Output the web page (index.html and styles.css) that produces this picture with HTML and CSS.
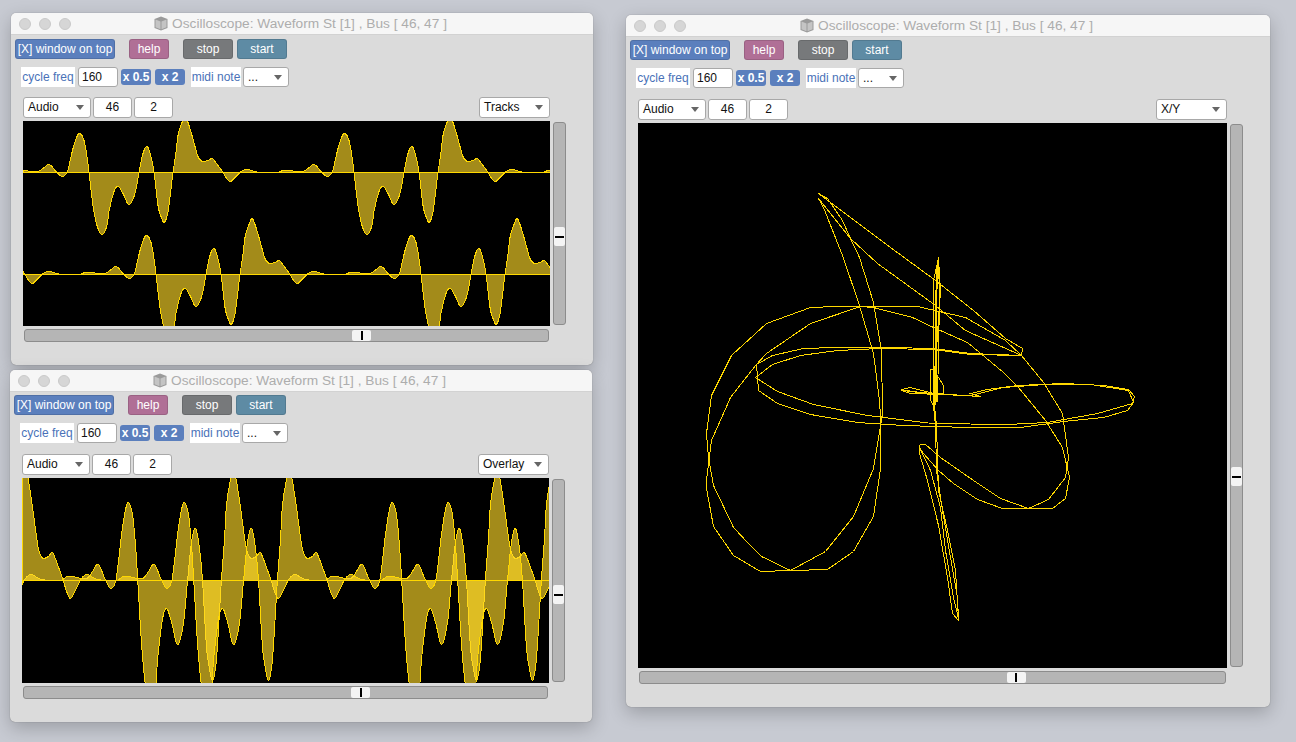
FILE: index.html
```html
<!DOCTYPE html>
<html lang="en">
<head>
  <meta charset="UTF-8" />
  <title>Oscilloscope</title>
  <link rel="stylesheet" href="styles.css">
</head>
<body>

  <div class="win win-tracks">
    <div class="titlebar">
      <div class="lights"><i></i><i></i><i></i></div>
      <div class="title">
        <svg class="cube" viewBox="0 0 14 15"><path d="M7 .5 13.5 3v9L7 14.5.5 12V3z" fill="#9a9a9a"/><path d="M1.5 3.6 6.5 5.6v7.6L1.5 11.3zM12.5 3.6 7.5 5.6v7.6l5-1.9z" fill="#c4c4c4"/></svg>
        Oscilloscope: Waveform St [1] , Bus [ 46, 47 ]
      </div>
    </div>
    <div class="row row-main">
      <button class="btn btn-ontop">[X] window on top</button>
      <button class="btn btn-help">help</button>
      <button class="btn btn-stop">stop</button>
      <button class="btn btn-start">start</button>
    </div>
    <div class="row row-freq">
      <span class="tag tag-cycle">cycle freq</span>
      <div class="field field-freq">160</div>
      <button class="mini mini-half">x 0.5</button>
      <button class="mini mini-double">x 2</button>
      <span class="tag tag-midi">midi note</span>
      <div class="pick pick-midi">...</div>
    </div>
    <div class="scope-area">
      <div class="row row-source">
        <div class="pick pick-audio">Audio</div>
        <div class="field field-num">46</div>
        <div class="field field-num">2</div>
        <div class="pick pick-mode">Tracks</div>
      </div>
      <div class="scope-spacer"></div>
      <svg class="scope" id="scope-tracks"></svg>
      <div class="vslider"><span class="vthumb"></span></div>
      <div class="hslider"><span class="hthumb"></span></div>
    </div>
  </div>

  <div class="win win-overlay">
    <div class="titlebar">
      <div class="lights"><i></i><i></i><i></i></div>
      <div class="title">
        <svg class="cube" viewBox="0 0 14 15"><path d="M7 .5 13.5 3v9L7 14.5.5 12V3z" fill="#9a9a9a"/><path d="M1.5 3.6 6.5 5.6v7.6L1.5 11.3zM12.5 3.6 7.5 5.6v7.6l5-1.9z" fill="#c4c4c4"/></svg>
        Oscilloscope: Waveform St [1] , Bus [ 46, 47 ]
      </div>
    </div>
    <div class="row row-main">
      <button class="btn btn-ontop">[X] window on top</button>
      <button class="btn btn-help">help</button>
      <button class="btn btn-stop">stop</button>
      <button class="btn btn-start">start</button>
    </div>
    <div class="row row-freq">
      <span class="tag tag-cycle">cycle freq</span>
      <div class="field field-freq">160</div>
      <button class="mini mini-half">x 0.5</button>
      <button class="mini mini-double">x 2</button>
      <span class="tag tag-midi">midi note</span>
      <div class="pick pick-midi">...</div>
    </div>
    <div class="scope-area">
      <div class="row row-source">
        <div class="pick pick-audio">Audio</div>
        <div class="field field-num">46</div>
        <div class="field field-num">2</div>
        <div class="pick pick-mode">Overlay</div>
      </div>
      <div class="scope-spacer"></div>
      <svg class="scope" id="scope-overlay"></svg>
      <div class="vslider"><span class="vthumb"></span></div>
      <div class="hslider"><span class="hthumb"></span></div>
    </div>
  </div>

  <div class="win win-xy">
    <div class="titlebar">
      <div class="lights"><i></i><i></i><i></i></div>
      <div class="title">
        <svg class="cube" viewBox="0 0 14 15"><path d="M7 .5 13.5 3v9L7 14.5.5 12V3z" fill="#9a9a9a"/><path d="M1.5 3.6 6.5 5.6v7.6L1.5 11.3zM12.5 3.6 7.5 5.6v7.6l5-1.9z" fill="#c4c4c4"/></svg>
        Oscilloscope: Waveform St [1] , Bus [ 46, 47 ]
      </div>
    </div>
    <div class="row row-main">
      <button class="btn btn-ontop">[X] window on top</button>
      <button class="btn btn-help">help</button>
      <button class="btn btn-stop">stop</button>
      <button class="btn btn-start">start</button>
    </div>
    <div class="row row-freq">
      <span class="tag tag-cycle">cycle freq</span>
      <div class="field field-freq">160</div>
      <button class="mini mini-half">x 0.5</button>
      <button class="mini mini-double">x 2</button>
      <span class="tag tag-midi">midi note</span>
      <div class="pick pick-midi">...</div>
    </div>
    <div class="scope-area">
      <div class="row row-source">
        <div class="pick pick-audio">Audio</div>
        <div class="field field-num">46</div>
        <div class="field field-num">2</div>
        <div class="pick pick-mode">X/Y</div>
      </div>
      <div class="scope-spacer"></div>
      <svg class="scope" id="scope-xy"></svg>
      <div class="vslider"><span class="vthumb"></span></div>
      <div class="hslider"><span class="hthumb"></span></div>
    </div>
  </div>

  <script src="scope.js"></script>
</body>
</html>
```

FILE: styles.css
```css
* {
  box-sizing: border-box;
}

html, body {
  height: 100%;
}

body {
  margin: 0;
  overflow: hidden;
  position: relative;
  background: #c7cad2;
  font-family: "Liberation Sans", Arial, sans-serif;
  font-size: 12px;
  color: #111;
}

/* windows sit on a free desktop */
.win {
  position: absolute;
  display: flex;
  flex-direction: column;
  background: #dbdbdb;
  border-radius: 5px;
  box-shadow: 0 0 1px rgba(0, 0, 0, 0.45), 0 6px 18px rgba(0, 0, 0, 0.22);
  --scope-w: 527px;
  --scope-h: 205px;
  --row-top: 4px;
  --source-top: 10px;
  --vthumb-shift: 26px;
  --hthumb-shift: 150px;
}

.win-tracks {
  left: 11px;
  top: 13px;
  width: 582px;
  height: 352px;
}

.win-overlay {
  left: 10px;
  top: 370px;
  width: 582px;
  height: 352px;
  --row-top: 3px;
  --source-top: 11px;
  --vthumb-shift: 28px;
}

.win-xy {
  left: 626px;
  top: 15px;
  width: 644px;
  height: 692px;
  --scope-w: 589px;
  --scope-h: 545px;
  --row-top: 3px;
  --source-top: 11px;
  --vthumb-shift: 162px;
  --hthumb-shift: 167px;
}

.titlebar {
  display: grid;
  grid-template-columns: 1fr auto 1fr;
  align-items: center;
  height: 22px;
  padding: 0 8px;
  background: #f6f6f6;
  border-bottom: 1px solid #d2d2d2;
  border-radius: 5px 5px 0 0;
}

.lights {
  display: flex;
  gap: 8px;
}

.lights i {
  width: 12px;
  height: 12px;
  border-radius: 50%;
  background: #d6d6d6;
  border: 1px solid #cacaca;
}

.title {
  display: flex;
  align-items: center;
  gap: 4px;
  margin-right: 3px;
  font-size: 13.7px;
  color: #adadad;
  white-space: nowrap;
}

.cube {
  width: 14px;
  height: 15px;
}

.row {
  display: flex;
  align-items: center;
}

.row-main {
  height: 20px;
  margin: var(--row-top) 0 0 4px;
}

.row-freq {
  height: 20px;
  margin: 8px 0 0 10px;
}

button {
  font-family: inherit;
  border: none;
  padding: 0;
  color: #fff;
  text-align: center;
}

.btn {
  height: 20px;
  font-size: 12px;
  border-radius: 3px;
  border: 1px solid rgba(0, 0, 0, 0.12);
}

.btn-ontop {
  width: 100px;
  background: #5b7fbd;
}

.btn-help {
  width: 40px;
  margin-left: 14px;
  background: #b06f96;
}

.btn-stop {
  width: 50px;
  margin-left: 14px;
  background: #77797b;
}

.btn-start {
  width: 50px;
  margin-left: 4px;
  background: #5e8ba4;
}

.tag {
  height: 20px;
  line-height: 20px;
  background: #fff;
  color: #4a72b8;
  white-space: nowrap;
  text-align: center;
}

.tag-cycle {
  width: 54px;
}

.tag-midi {
  width: 50px;
  margin-left: 6px;
}

.field, .pick {
  height: 20px;
  line-height: 18px;
  background: #fff;
  border: 1px solid #a8a8a8;
  border-radius: 3px;
  color: #111;
}

.field-freq {
  width: 40px;
  margin-left: 3px;
  padding-left: 3px;
}

.field-num {
  width: 39px;
  margin-left: 2px;
  text-align: center;
}

.mini {
  height: 16px;
  font-size: 12px;
  font-weight: bold;
  border-radius: 3px;
  background: #5b7fbd;
}

.mini-half {
  width: 30px;
  margin-left: 3px;
}

.mini-double {
  width: 30px;
  margin-left: 4px;
}

.pick {
  position: relative;
  padding-left: 4px;
}

/* drop-down arrow */
.pick::after {
  content: "";
  position: absolute;
  right: 6px;
  top: 7px;
  border-left: 4px solid transparent;
  border-right: 4px solid transparent;
  border-top: 5px solid #666;
}

.pick-midi {
  width: 46px;
  margin-left: 2px;
}

.pick-audio {
  width: 68px;
  height: 21px;
}

.row-source {
  grid-column: 1;
  height: 21px;
}

.row-source .field-num {
  height: 21px;
}

.pick-mode {
  width: 71px;
  height: 21px;
  margin-left: auto;
}

.scope-area {
  display: grid;
  grid-template-columns: var(--scope-w) 13px;
  grid-template-rows: 21px 3px var(--scope-h) 13px;
  column-gap: 3px;
  margin: var(--source-top) 0 0 12px;
}

.scope-spacer {
  grid-column: 1;
}

.scope {
  grid-column: 1;
  grid-row: 3;
  display: block;
  width: var(--scope-w);
  height: var(--scope-h);
  background: #000;
}

.vslider {
  grid-column: 2;
  grid-row: 3;
  display: flex;
  align-items: center;
  margin: 1px 0;
  background: #b5b5b5;
  border: 1px solid #8c8c8c;
  border-radius: 3px;
}

.vthumb {
  display: flex;
  align-items: center;
  justify-content: center;
  width: 100%;
  height: 19px;
  margin-top: var(--vthumb-shift);
  background: #f4f4f4;
  border-radius: 2px;
}

.vthumb::before {
  content: "";
  width: 9px;
  height: 2px;
  background: #000;
}

.hslider {
  grid-column: 1;
  grid-row: 4;
  display: flex;
  align-items: center;
  justify-content: center;
  margin: 3px 1px -3px;
  background: #b5b5b5;
  border: 1px solid #8c8c8c;
  border-radius: 3px;
}

.hthumb {
  display: flex;
  align-items: center;
  justify-content: center;
  width: 19px;
  height: 100%;
  margin-left: var(--hthumb-shift);
  background: #f4f4f4;
  border-radius: 2px;
}

.hthumb::before {
  content: "";
  width: 2px;
  height: 9px;
  background: #000;
}
```

FILE: scope.js
```js
// one cycle of the signal: [phase, level], traced from the display
const PERIOD = 265;
const WAVE = [
  [0, 2], [10, 1], [15, 1], [20, 4], [25, 8], [28, 7], [32, 2], [34, 0], [39, -4], [44, 0], [47, 11],
  [50, 24], [54, 36], [57, 39], [61, 32], [64, 16], [66, 0], [70, -33], [74, -53], [79, -62],
  [84, -53], [86, -39], [91, -19], [95, -14], [100, -21], [106, -32], [112, -21], [116, 0],
  [120, 19], [124, 26], [128, 16], [131, 0], [135, -33], [138, -44], [141, -50], [144, -44],
  [146, -33], [150, 0], [153, 20], [155, 37], [159, 50], [162, 56], [165, 50], [169, 37],
  [172, 26], [175, 16], [178, 12], [180, 11], [185, 12], [189, 14], [192, 11], [195, 7],
  [200, 0], [203, -5], [207, -9], [211, -6], [217, 0], [220, 2], [224, 3], [230, 1.5],
  [234, 0.5], [254, 0], [260, 2]
];

// x/y trace, page coordinates
const XY_ORIGIN = [638, 123];
const XY_PASSES = [
  [[919,444],[925,444],[940,457],[973,480],[1000,498],[1028,508],[1048,499],[1065,477],[1068,457],[1062,413],
   [1043,382],[1021,355],[1005,340],[965,317],[917,306],[873,306],[835,306],[810,307],[766,323],[731,355],
   [711,395],[706,433],[708,457],[713,485],[733,527],[748,543],[761,556],[790,570],[825,551],[853,516],
   [873,468],[882,413],[881,350],[873,302],[859,257],[850,238],[842,220],[827,198],[818,193],[890,247],
   [935,280],[973,310],[1005,338],[1022,348],[1021,355],[970,353],[933,348],[890,347],[835,347],[803,348],
   [772,355],[756,364],[758,390],[777,403],[810,414],[857,422],[903,425],[968,427],[1020,427],[1063,421],
   [1103,417],[1127,410],[1133,402],[1128,390],[1090,384],[1045,384],[1003,387],[970,395],[943,394],[923,393],
   [901,389],[910,387],[933,393],[943,393],[943,385],[933,369],[930,369],[930,400],[933,405],[933,280],
   [938,258],[940,290],[937,333],[933,405],[935,425],[936,470],[942,510],[950,557],[957,597],[958,620],
   [952,613],[947,577],[938,525],[927,480],[919,453],[919,444]],
  [[919,447],[923,453],[938,470],[953,483],[977,499],[1002,508],[1052,508],[1065,498],[1069,477],[1062,447],
   [1045,420],[1018,387],[1003,372],[967,342],[933,327],[912,317],[873,307],[860,306],[810,323],[766,353],
   [755,365],[730,397],[711,440],[706,480],[706,488],[713,526],[733,555],[760,571],[790,570],[827,569],
   [853,551],[873,516],[880,468],[880,417],[879,400],[873,353],[858,302],[842,255],[823,207],[818,198],[850,238],
   [877,263],[935,305],[965,330],[1021,355],[970,354],[933,349],[880,348],[837,350],[800,355],[772,364],
   [755,377],[777,391],[813,404],[867,415],[932,423],[1007,424],[1047,422],[1097,413],[1132,403],[1134,396],
   [1128,389],[1103,385],[1063,383],[1017,385],[987,389],[970,393],[980,396],[943,394],[910,393],[901,390],
   [932,393],[936,400],[935,300],[937,260],[935,330],[934,405],[936,425],[938,490],[947,530],[955,570],
   [958,618],[953,597],[945,550],[940,507],[930,470],[919,447]],
  [[935,405],[936,300],[938,257],[939,300],[937,400],[934,395]]
];

function wave(p) {
  p = ((p % PERIOD) + PERIOD) % PERIOD;
  const pts = [WAVE[WAVE.length - 1].map((v, i) => i ? v : v - PERIOD), ...WAVE, [PERIOD, WAVE[0][1]], [WAVE[1][0] + PERIOD, WAVE[1][1]]];
  let i = 1;
  while (pts[i + 1][0] < p) i++;
  const [x0, y0] = pts[i], [x1, y1] = pts[i + 1];
  const [xa, ya] = pts[i - 1], [xb, yb] = pts[i + 2] || pts[i + 1];
  const h = x1 - x0, t = (p - x0) / h;
  const m0 = (y1 - ya) / (x1 - xa) * h;
  const m1 = (yb - y0) / (xb - x0) * h;
  return (2*t*t*t - 3*t*t + 1) * y0 + (t*t*t - 2*t*t + t) * m0 + (-2*t*t*t + 3*t*t) * y1 + (t*t*t - t*t) * m1;
}

function setup(id, w, h) {
  const svg = document.getElementById(id);
  svg.setAttribute("viewBox", `0 0 ${w} ${h}`);
  svg.setAttribute("shape-rendering", "crispEdges");
  return svg;
}

function add(svg, d, cls) {
  const path = document.createElementNS("http://www.w3.org/2000/svg", "path");
  path.setAttribute("d", d);
  path.setAttribute("fill", cls === "area" ? "rgba(255, 217, 40, 0.64)" : "none");
  path.setAttribute("stroke", "#ffd800");
  svg.appendChild(path);
}

function track(svg, w, center, amp, shift, stretch) {
  let d = `M0 ${center}`;
  for (let x = 0; x <= w; x++) {
    d += ` L${x} ${(center - amp * wave((x - shift) * stretch)).toFixed(1)}`;
  }
  d += ` L${w} ${center} Z`;
  add(svg, d, "area");
}

const tracks = setup("scope-tracks", 527, 205);
track(tracks, 527, 51.5, 1, 0, 1);
track(tracks, 527, 153.5, 1, 67, 1);

const overlay = setup("scope-overlay", 527, 205);
track(overlay, 527, 102.5, 2, 50, 1.004);
track(overlay, 527, 102.5, 2, 106, 1.004);

const xy = setup("scope-xy", 589, 545);
XY_PASSES.forEach(pass => {
  const d = pass.map(([x, y], i) => `${i ? "L" : "M"}${x - XY_ORIGIN[0] + 0.5} ${y - XY_ORIGIN[1] + 0.5}`).join(" ");
  add(xy, d, "line");
});
```
